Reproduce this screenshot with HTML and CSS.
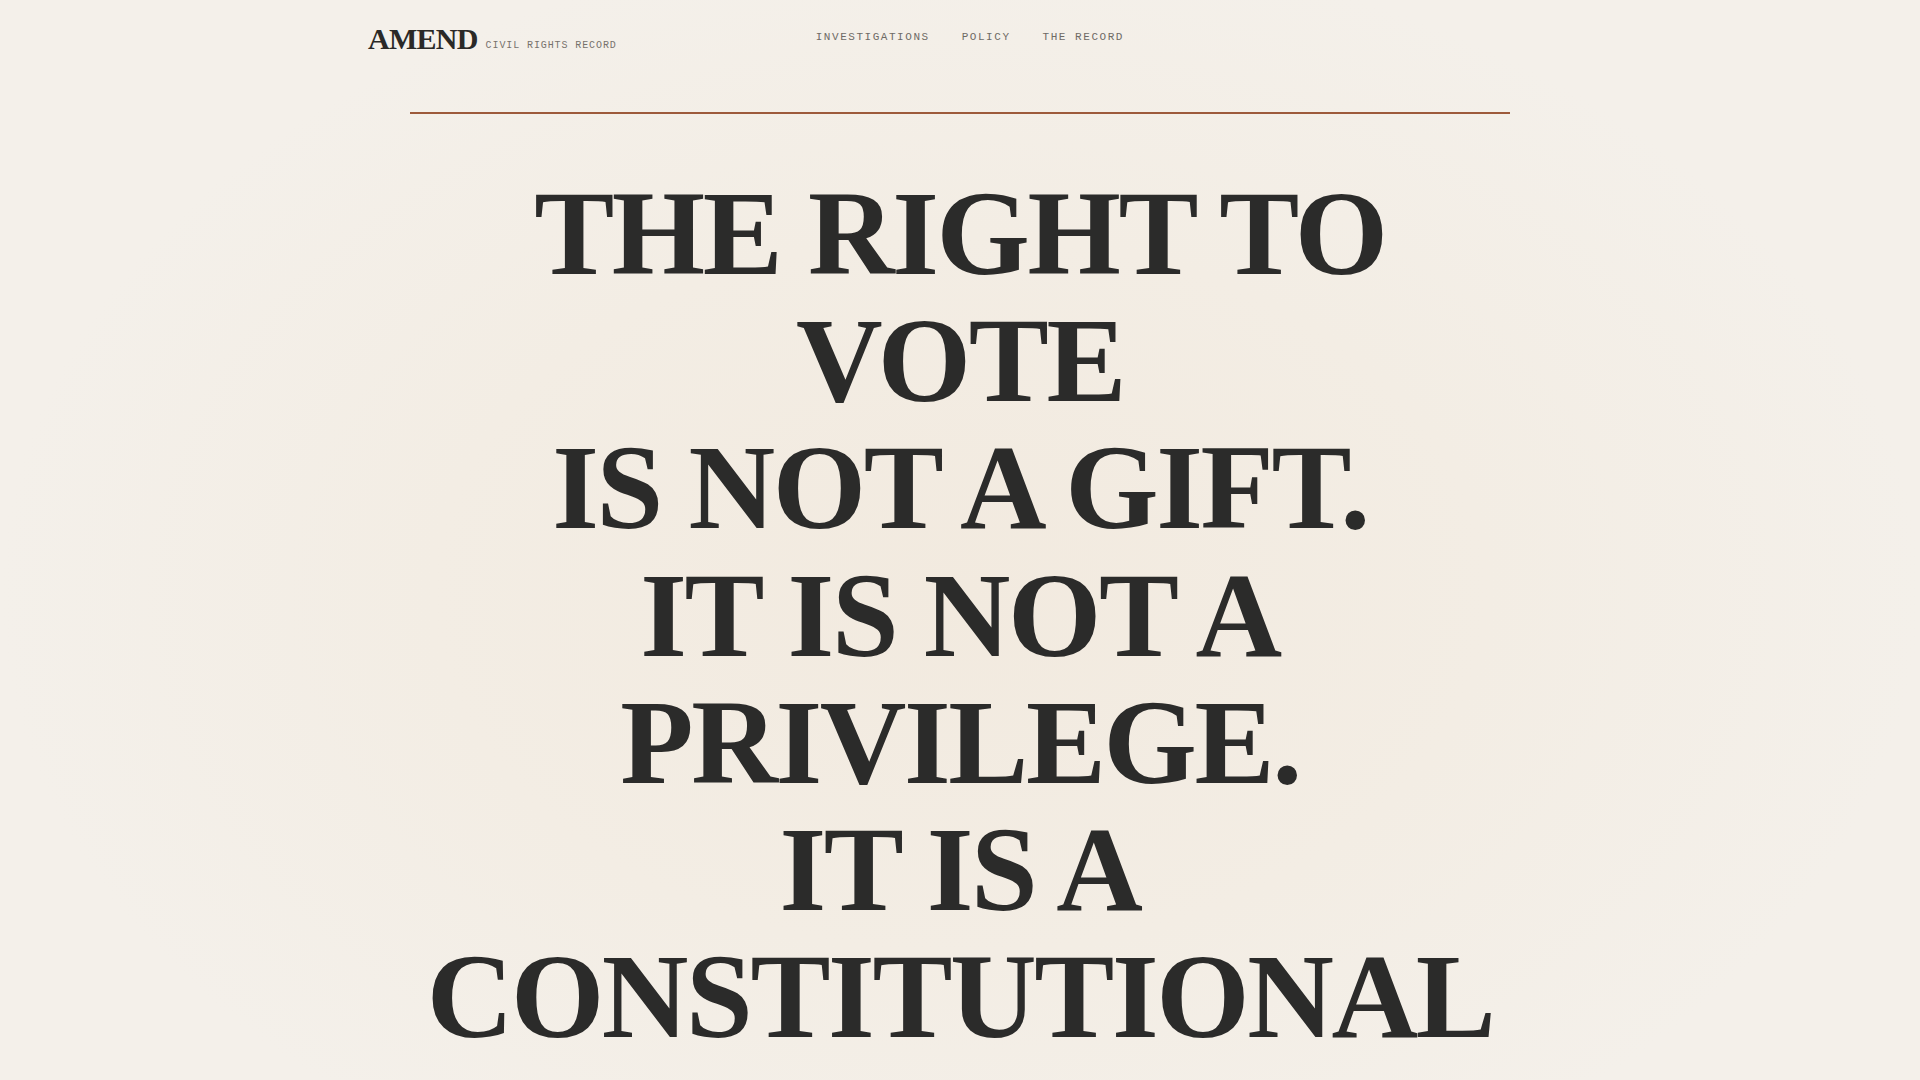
FILE: index.html
```html
<!DOCTYPE html>
<html lang="en">
<head>
<meta charset="utf-8">
<title>AMEND — Civil Rights Record</title>
<link rel="stylesheet" href="styles.css">
</head>
<body>
<header class="site-header">
  <div class="brand">
    <span class="brand-name">AMEND</span>
    <span class="brand-tag">CIVIL RIGHTS RECORD</span>
  </div>
  <nav class="main-nav">
    <a href="#">INVESTIGATIONS</a>
    <a href="#">POLICY</a>
    <a href="#">THE RECORD</a>
  </nav>
</header>
<main class="hero">
  <hr class="rule">
  <h1 class="headline">
    <span class="line">THE RIGHT TO VOTE</span>
    <span class="line">IS NOT A GIFT.</span>
    <span class="line">IT IS NOT A PRIVILEGE.</span>
    <span class="line">IT IS A CONSTITUTIONAL GUARANTEE.</span>
  </h1>
</main>
</body>
</html>
```
FILE: styles.css
```css
html, body {
  margin: 0;
  padding: 0;
}
body {
  min-height: 100vh;
  background-color: #f4f0ea;
  background-image: radial-gradient(ellipse 50% 55% at 50% 50%, #f2eadf 0%, #f3ede4 55%, #f4f0ea 100%);
  color: #2b2b2a;
  font-family: "Liberation Serif", "Times New Roman", serif;
  overflow: hidden;
}
.site-header {
  width: 1184px;
  margin: 0 auto;
  padding-top: 21px;
  height: 35px;
  display: flex;
  align-items: center;
}
.brand {
  display: flex;
  align-items: baseline;
  gap: 8px;
}
.brand-name {
  font-family: "Liberation Serif", serif;
  font-weight: 700;
  font-size: 30px;
  letter-spacing: -0.025em;
  color: #2a2927;
}
.brand-tag {
  font-family: "Liberation Mono", monospace;
  font-size: 10px;
  letter-spacing: 0.09em;
  color: #77726c;
  position: relative;
  top: -1px;
}
.main-nav {
  display: flex;
  gap: 32px;
  margin-left: 199px;
  position: relative;
  top: -2px;
}
.main-nav a {
  font-family: "Liberation Mono", monospace;
  font-size: 11px;
  letter-spacing: 0.14em;
  color: #6e6a65;
  text-decoration: none;
}
.hero {
  width: 1100px;
  margin: 0 auto;
}
.rule {
  margin: 56px 0 0;
  border: 0;
  height: 2px;
  background: #9d5a3b;
}
.headline {
  margin: 56px 0 0;
  text-align: center;
  font-family: "Liberation Serif", "Times New Roman", serif;
  font-weight: 700;
  font-size: 120px;
  line-height: 1.06;
  letter-spacing: -0.02em;
  color: #2b2b2a;
}
.headline .line {
  display: block;
}
```
